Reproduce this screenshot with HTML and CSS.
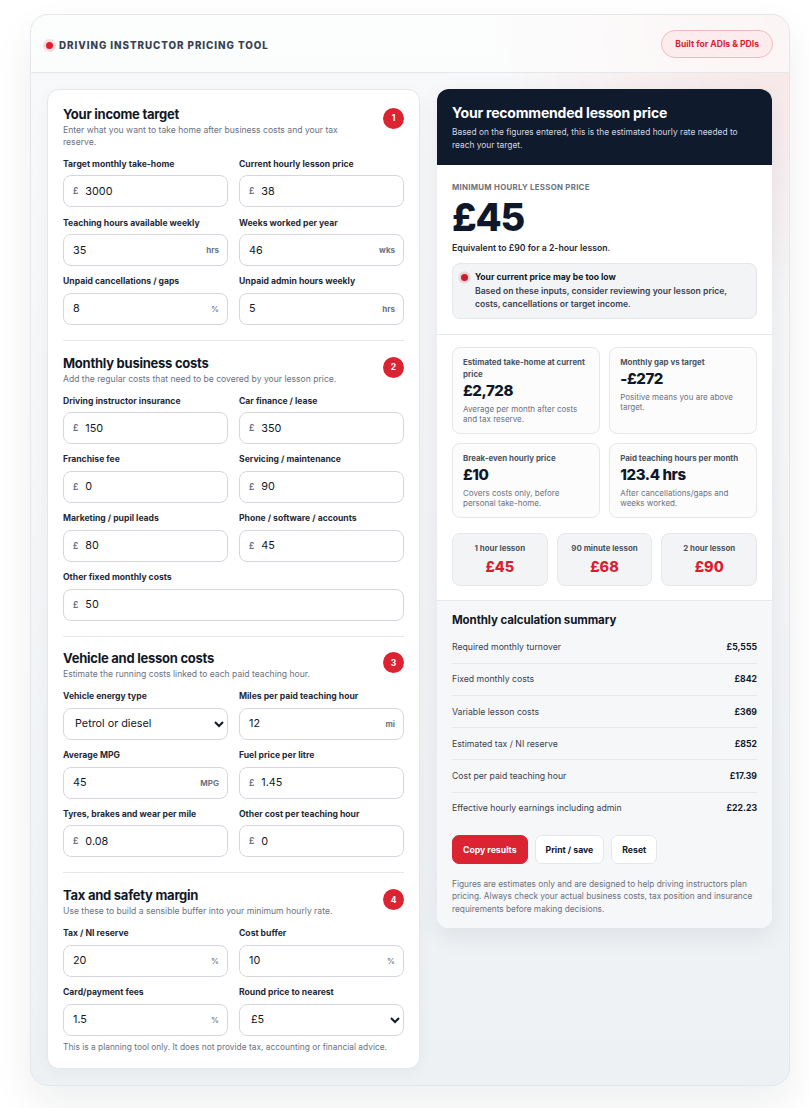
FILE: index.html
```html
<!DOCTYPE html>
<html lang="en">
<head>
    <meta charset="UTF-8">
    <meta name="viewport" content="width=device-width, initial-scale=1.0">
    <title>Driving Instructor Pricing Tool</title>
    <link rel="stylesheet" href="styles.css">
</head>
<body>
    <div class="shell">
        <header class="topbar">
            <div class="brand">
                <span class="brand-dot"></span>
                <span class="brand-name">Driving instructor pricing tool</span>
            </div>
            <span class="pill">Built for ADIs &amp; PDIs</span>
        </header>

        <main class="layout">
            <!-- inputs -->
            <div class="panel">
                <section class="block">
                    <div class="block-head">
                        <div>
                            <h2>Your income target</h2>
                            <p class="hint">Enter what you want to take home after business costs and your tax reserve.</p>
                        </div>
                        <span class="step">1</span>
                    </div>
                    <div class="grid">
                        <div class="item">
                            <span class="label">Target monthly take-home</span>
                            <div class="field"><span class="pre">£</span><input type="text" value="3000"></div>
                        </div>
                        <div class="item">
                            <span class="label">Current hourly lesson price</span>
                            <div class="field"><span class="pre">£</span><input type="text" value="38"></div>
                        </div>
                        <div class="item">
                            <span class="label">Teaching hours available weekly</span>
                            <div class="field"><input type="text" value="35"><span class="suf">hrs</span></div>
                        </div>
                        <div class="item">
                            <span class="label">Weeks worked per year</span>
                            <div class="field"><input type="text" value="46"><span class="suf">wks</span></div>
                        </div>
                        <div class="item">
                            <span class="label">Unpaid cancellations / gaps</span>
                            <div class="field"><input type="text" value="8"><span class="suf pct">%</span></div>
                        </div>
                        <div class="item">
                            <span class="label">Unpaid admin hours weekly</span>
                            <div class="field"><input type="text" value="5"><span class="suf">hrs</span></div>
                        </div>
                    </div>
                </section>

                <section class="block">
                    <div class="block-head">
                        <div>
                            <h2>Monthly business costs</h2>
                            <p class="hint">Add the regular costs that need to be covered by your lesson price.</p>
                        </div>
                        <span class="step">2</span>
                    </div>
                    <div class="grid">
                        <div class="item">
                            <span class="label">Driving instructor insurance</span>
                            <div class="field"><span class="pre">£</span><input type="text" value="150"></div>
                        </div>
                        <div class="item">
                            <span class="label">Car finance / lease</span>
                            <div class="field"><span class="pre">£</span><input type="text" value="350"></div>
                        </div>
                        <div class="item">
                            <span class="label">Franchise fee</span>
                            <div class="field"><span class="pre">£</span><input type="text" value="0"></div>
                        </div>
                        <div class="item">
                            <span class="label">Servicing / maintenance</span>
                            <div class="field"><span class="pre">£</span><input type="text" value="90"></div>
                        </div>
                        <div class="item">
                            <span class="label">Marketing / pupil leads</span>
                            <div class="field"><span class="pre">£</span><input type="text" value="80"></div>
                        </div>
                        <div class="item">
                            <span class="label">Phone / software / accounts</span>
                            <div class="field"><span class="pre">£</span><input type="text" value="45"></div>
                        </div>
                        <div class="item wide">
                            <span class="label">Other fixed monthly costs</span>
                            <div class="field"><span class="pre">£</span><input type="text" value="50"></div>
                        </div>
                    </div>
                </section>

                <section class="block">
                    <div class="block-head">
                        <div>
                            <h2>Vehicle and lesson costs</h2>
                            <p class="hint">Estimate the running costs linked to each paid teaching hour.</p>
                        </div>
                        <span class="step">3</span>
                    </div>
                    <div class="grid">
                        <div class="item">
                            <span class="label">Vehicle energy type</span>
                            <select class="select">
                                <option>Petrol or diesel</option>
                                <option>Electric</option>
                                <option>Hybrid</option>
                            </select>
                        </div>
                        <div class="item">
                            <span class="label">Miles per paid teaching hour</span>
                            <div class="field"><input type="text" value="12"><span class="suf">mi</span></div>
                        </div>
                        <div class="item">
                            <span class="label">Average MPG</span>
                            <div class="field"><input type="text" value="45"><span class="suf">MPG</span></div>
                        </div>
                        <div class="item">
                            <span class="label">Fuel price per litre</span>
                            <div class="field"><span class="pre">£</span><input type="text" value="1.45"></div>
                        </div>
                        <div class="item">
                            <span class="label">Tyres, brakes and wear per mile</span>
                            <div class="field"><span class="pre">£</span><input type="text" value="0.08"></div>
                        </div>
                        <div class="item">
                            <span class="label">Other cost per teaching hour</span>
                            <div class="field"><span class="pre">£</span><input type="text" value="0"></div>
                        </div>
                    </div>
                </section>

                <section class="block">
                    <div class="block-head">
                        <div>
                            <h2>Tax and safety margin</h2>
                            <p class="hint">Use these to build a sensible buffer into your minimum hourly rate.</p>
                        </div>
                        <span class="step">4</span>
                    </div>
                    <div class="grid">
                        <div class="item">
                            <span class="label">Tax / NI reserve</span>
                            <div class="field"><input type="text" value="20"><span class="suf pct">%</span></div>
                        </div>
                        <div class="item">
                            <span class="label">Cost buffer</span>
                            <div class="field"><input type="text" value="10"><span class="suf pct">%</span></div>
                        </div>
                        <div class="item">
                            <span class="label">Card/payment fees</span>
                            <div class="field"><input type="text" value="1.5"><span class="suf pct">%</span></div>
                        </div>
                        <div class="item">
                            <span class="label">Round price to nearest</span>
                            <select class="select">
                                <option>£5</option>
                                <option>£1</option>
                                <option>£0.50</option>
                            </select>
                        </div>
                    </div>
                    <p class="note">This is a planning tool only. It does not provide tax, accounting or financial advice.</p>
                </section>
            </div>

            <!-- results -->
            <aside class="result">
                <div class="result-head">
                    <h2>Your recommended lesson price</h2>
                    <p>Based on the figures entered, this is the estimated hourly rate needed to reach your target.</p>
                </div>

                <div class="price-block">
                    <div class="eyebrow">Minimum hourly lesson price</div>
                    <div class="big-price">£45</div>
                    <div class="equiv">Equivalent to £90 for a 2-hour lesson.</div>
                    <div class="alert">
                        <span class="alert-dot"></span>
                        <div>
                            <strong>Your current price may be too low</strong>
                            <p>Based on these inputs, consider reviewing your lesson price, costs, cancellations or target income.</p>
                        </div>
                    </div>
                </div>

                <div class="stats">
                    <div class="stat-grid">
                        <div class="stat">
                            <div class="stat-label">Estimated take-home at current price</div>
                            <div class="stat-value">£2,728</div>
                            <div class="stat-note">Average per month after costs and tax reserve.</div>
                        </div>
                        <div class="stat">
                            <div class="stat-label">Monthly gap vs target</div>
                            <div class="stat-value">-£272</div>
                            <div class="stat-note">Positive means you are above target.</div>
                        </div>
                        <div class="stat">
                            <div class="stat-label">Break-even hourly price</div>
                            <div class="stat-value">£10</div>
                            <div class="stat-note">Covers costs only, before personal take-home.</div>
                        </div>
                        <div class="stat">
                            <div class="stat-label">Paid teaching hours per month</div>
                            <div class="stat-value">123.4 hrs</div>
                            <div class="stat-note">After cancellations/gaps and weeks worked.</div>
                        </div>
                    </div>
                    <div class="lessons">
                        <div class="lesson"><span>1 hour lesson</span><b>£45</b></div>
                        <div class="lesson"><span>90 minute lesson</span><b>£68</b></div>
                        <div class="lesson"><span>2 hour lesson</span><b>£90</b></div>
                    </div>
                </div>

                <div class="summary">
                    <h3>Monthly calculation summary</h3>
                    <div class="rows">
                        <div class="row"><span>Required monthly turnover</span><b>£5,555</b></div>
                        <div class="row"><span>Fixed monthly costs</span><b>£842</b></div>
                        <div class="row"><span>Variable lesson costs</span><b>£369</b></div>
                        <div class="row"><span>Estimated tax / NI reserve</span><b>£852</b></div>
                        <div class="row"><span>Cost per paid teaching hour</span><b>£17.39</b></div>
                        <div class="row"><span>Effective hourly earnings including admin</span><b>£22.23</b></div>
                    </div>
                    <div class="actions">
                        <button class="btn btn-primary">Copy results</button>
                        <button class="btn">Print / save</button>
                        <button class="btn">Reset</button>
                    </div>
                    <p class="disclaimer">Figures are estimates only and are designed to help driving instructors plan pricing. Always check your actual business costs, tax position and insurance requirements before making decisions.</p>
                </div>
            </aside>
        </main>
    </div>
</body>
</html>
```

FILE: styles.css
```css
* {
    box-sizing: border-box;
}
body {
    margin: 0;
    background: #fff;
    font-family: "Inter", "Liberation Sans", sans-serif;
    color: #111827;
}
.shell {
    width: 760px;
    margin: 14px 0 24px 30px;
    border: 1px solid #e3e6ea;
    border-radius: 18px;
    background:
        radial-gradient(circle at 100% 0%, rgba(239, 68, 68, 0.11), rgba(239, 68, 68, 0) 300px),
        linear-gradient(180deg, #f8f9fa 0%, #eef1f4 100%);
    box-shadow: 0 18px 40px rgba(15, 23, 42, 0.07);
    overflow: hidden;
}
.topbar {
    height: 58px;
    display: flex;
    align-items: center;
    justify-content: space-between;
    padding: 0 16px 0 15px;
    border-bottom: 1px solid #e5e7eb;
    background: rgba(255, 255, 255, 0.6);
}
.brand {
    display: flex;
    align-items: center;
    gap: 6px;
    padding-top: 4px;
}
.brand-dot {
    width: 7px;
    height: 7px;
    border-radius: 50%;
    background: #e11d2e;
    box-shadow: 0 0 0 3px rgba(225, 29, 46, 0.14);
}
.brand-name {
    font-size: 9.8px;
    font-weight: 800;
    text-transform: uppercase;
    letter-spacing: 0.95px;
    color: #374151;
}
.pill {
    height: 28px;
    line-height: 26px;
    padding: 0 13px;
    border: 1px solid #f4b9bf;
    border-radius: 999px;
    background: #fdecee;
    color: #d91f2f;
    font-size: 8.6px;
    font-weight: 700;
}
.layout {
    display: grid;
    grid-template-columns: 373px 335px;
    gap: 17px;
    align-items: start;
    padding: 16px;
}

/* left column */
.panel {
    background: #fff;
    border: 1px solid #e5e7eb;
    border-radius: 12px;
    padding: 15.5px 15px 15px;
    box-shadow: 0 4px 14px rgba(15, 23, 42, 0.04);
}
.block {
    padding-bottom: 15px;
    border-bottom: 1px solid #e5e7eb;
}
.block + .block {
    padding-top: 13.8px;
}
.block:last-child {
    padding-bottom: 0;
    border-bottom: none;
}
.block-head {
    display: flex;
    justify-content: space-between;
    align-items: flex-start;
    gap: 36px;
}
.block-head h2 {
    margin: 0;
    font-size: 13px;
    line-height: 16px;
    font-weight: 700;
    letter-spacing: -0.25px;
    color: #111827;
}
.hint {
    margin: 2px 0 0;
    font-size: 8.6px;
    line-height: 12.3px;
    color: #6b7280;
}
.step {
    flex: none;
    width: 21px;
    height: 21px;
    margin-top: 2px;
    border-radius: 50%;
    background: #dc2332;
    color: #fff;
    font-size: 8.5px;
    font-weight: 700;
    display: flex;
    align-items: center;
    justify-content: center;
}
.grid {
    display: grid;
    grid-template-columns: minmax(0, 1fr) minmax(0, 1fr);
    column-gap: 11px;
    row-gap: 9.3px;
    margin-top: 9.7px;
}
.item {
    min-width: 0;
}
.item.wide {
    grid-column: 1 / -1;
}
.label {
    display: block;
    font-size: 8.6px;
    line-height: 12px;
    font-weight: 700;
    color: #1f2937;
    margin-bottom: 5.5px;
}
.field {
    height: 32px;
    display: flex;
    align-items: center;
    border: 1px solid #d4d7dd;
    border-radius: 8px;
    background: #fff;
    padding: 0 8px 0 9px;
}
.field input {
    flex: 1;
    width: 0;
    min-width: 0;
    border: none;
    outline: none;
    background: transparent;
    padding: 0;
    font-family: inherit;
    font-size: 10.8px;
    color: #111827;
}
.pre {
    font-size: 8.4px;
    font-weight: 700;
    color: #6b7280;
    margin-right: 7px;
}
.suf {
    font-size: 8px;
    font-weight: 700;
    color: #6b7280;
}
.suf.pct {
    font-weight: 500;
}
.select {
    display: block;
    width: 100%;
    height: 32px;
    border: 1px solid #d4d7dd;
    border-radius: 8px;
    background: #fff;
    padding: 0 6px 0 7px;
    font-family: inherit;
    font-size: 10.8px;
    color: #111827;
}
.note {
    margin: 5.3px 0 0;
    font-size: 8.4px;
    line-height: 12.3px;
    color: #6b7280;
}

/* right column */
.result {
    background: #fff;
    border-radius: 12px;
    overflow: hidden;
    box-shadow: 0 8px 24px rgba(15, 23, 42, 0.08);
}
.result-head {
    background: #0f1a2d;
    padding: 15px 15px 14px;
}
.result-head h2 {
    margin: 0;
    font-size: 14px;
    line-height: 18px;
    font-weight: 700;
    letter-spacing: -0.2px;
    color: #fff;
}
.result-head p {
    margin: 4px 0 0;
    font-size: 8.4px;
    line-height: 12.7px;
    color: #cfd6e0;
}
.price-block {
    padding: 16px 15px 15px;
    border-bottom: 1px solid #e5e7eb;
}
.eyebrow {
    font-size: 7.8px;
    line-height: 12px;
    font-weight: 700;
    text-transform: uppercase;
    letter-spacing: 0.3px;
    color: #6b7280;
}
.big-price {
    margin-top: 4px;
    font-size: 38px;
    line-height: 40px;
    font-weight: 800;
    letter-spacing: -1.2px;
    color: #0f172a;
}
.equiv {
    margin-top: 4.5px;
    font-size: 8.7px;
    line-height: 12px;
    font-weight: 600;
    color: #1f2937;
}
.alert {
    margin-top: 9px;
    display: flex;
    align-items: flex-start;
    gap: 7px;
    padding: 7px 12px 6.5px 8px;
    border: 1px solid #e5e7eb;
    border-radius: 8px;
    background: #f3f4f6;
}
.alert-dot {
    flex: none;
    width: 7px;
    height: 7px;
    margin-top: 3px;
    border-radius: 50%;
    background: #c81e2b;
    box-shadow: 0 0 0 2.5px rgba(200, 30, 43, 0.14);
}
.alert strong {
    display: block;
    font-size: 8.6px;
    line-height: 13px;
    font-weight: 700;
    color: #111827;
}
.alert p {
    margin: 1.5px 0 0;
    font-size: 8.6px;
    line-height: 13px;
    font-weight: 600;
    color: #374151;
}
.stats {
    padding: 12.5px 15px 14px;
}
.stat-grid {
    display: grid;
    grid-template-columns: minmax(0, 1fr) minmax(0, 1fr);
    gap: 9.5px;
}
.stat {
    border: 1px solid #e5e7eb;
    border-radius: 8px;
    background: #fcfcfd;
    padding: 7.5px 10px 9px;
}
.stat-label {
    font-size: 7.9px;
    line-height: 12px;
    font-weight: 700;
    color: #4b5563;
}
.stat-value {
    margin-top: 1.5px;
    font-size: 15px;
    line-height: 20px;
    font-weight: 800;
    letter-spacing: -0.4px;
    color: #0f172a;
}
.stat-note {
    margin-top: 2.3px;
    font-size: 8px;
    line-height: 10px;
    color: #6b7280;
}
.lessons {
    display: grid;
    grid-template-columns: 1fr 1fr 1fr;
    gap: 9px;
    margin-top: 15px;
}
.lesson {
    display: flex;
    flex-direction: column;
    align-items: center;
    padding: 8px 6px 9px;
    border: 1px solid #e5e7eb;
    border-radius: 8px;
    background: #f3f4f6;
}
.lesson span {
    font-size: 7.9px;
    line-height: 12px;
    font-weight: 700;
    color: #4b5563;
}
.lesson b {
    margin-top: 4.5px;
    font-size: 14.5px;
    line-height: 18px;
    font-weight: 800;
    color: #d91f2f;
}
.summary {
    background: #f6f7f9;
    border-top: 1px solid #e5e7eb;
    padding: 11px 15px 13px;
}
.summary h3 {
    margin: 0;
    font-size: 11.5px;
    line-height: 16px;
    font-weight: 700;
    letter-spacing: -0.1px;
    color: #111827;
}
.rows {
    margin-top: 3.3px;
}
.row {
    display: flex;
    justify-content: space-between;
    padding: 9.65px 0;
    border-bottom: 1px solid #e5e7eb;
    font-size: 8.7px;
    line-height: 12px;
    color: #374151;
}
.row:last-child {
    border-bottom: none;
}
.row b {
    font-weight: 700;
    color: #111827;
}
.actions {
    display: flex;
    gap: 7px;
    margin-top: 11.3px;
}
.btn {
    height: 29px;
    padding: 0 10px;
    border: 1px solid #e5e7eb;
    border-radius: 7px;
    background: #fff;
    font-family: inherit;
    font-size: 8.7px;
    font-weight: 700;
    color: #111827;
    cursor: pointer;
}
.btn-primary {
    background: #dc2332;
    border-color: #dc2332;
    color: #fff;
}
.disclaimer {
    margin: 13.5px 0 0;
    font-size: 8.3px;
    line-height: 12.5px;
    color: #6b7280;
}
```
